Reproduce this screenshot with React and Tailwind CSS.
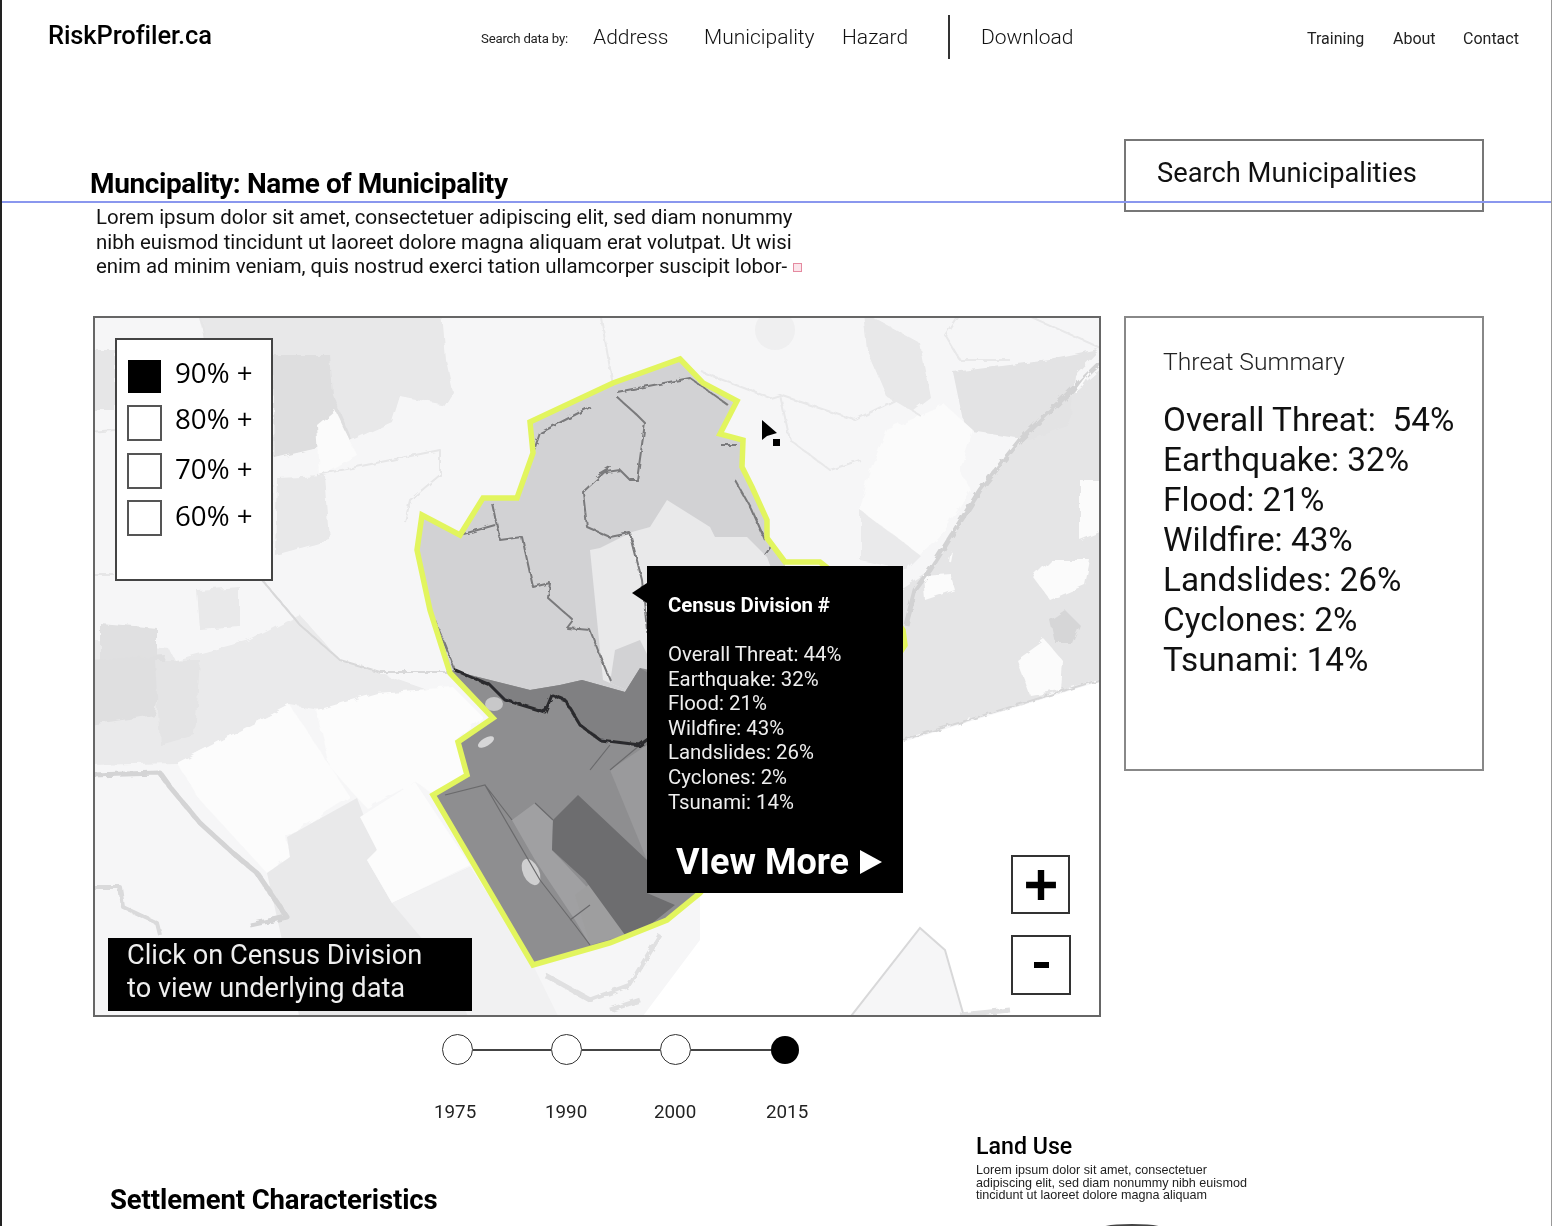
const threats = ["Overall Threat:  54%", "Earthquake: 32%", "Flood: 21%", "Wildfire: 43%", "Landslides: 26%", "Cyclones: 2%", "Tsunami: 14%"];
const tip = ["Overall Threat: 44%", "Earthquake: 32%", "Flood: 21%", "Wildfire: 43%", "Landslides: 26%", "Cyclones: 2%", "Tsunami: 14%"];

function MapArt() {
  return (
    <svg viewBox="95 318 1004 697" className="absolute inset-0 w-[1004px] h-[697px] blur-[0.5px]">
      <defs>
        <filter id="rough" x="-5%" y="-5%" width="110%" height="110%">
          <feTurbulence type="fractalNoise" baseFrequency="0.09" numOctaves="2" seed="4" />
          <feDisplacementMap in="SourceGraphic" scale="7" />
        </filter>
        <filter id="rough2" x="-5%" y="-5%" width="110%" height="110%">
          <feTurbulence type="fractalNoise" baseFrequency="0.14" numOctaves="2" seed="9" />
          <feDisplacementMap in="SourceGraphic" scale="5" />
        </filter>
      </defs>
      <rect x="95" y="318" width="1004" height="697" fill="#f6f6f7" />
      <g filter="url(#rough)">
        {/* pale regions, north-west */}
        <path fill="#e8e8e9" d="M197 312 L442 312 L446 360 L453 392 L445 405 L400 396 L392 422 L352 440 L272 458 L272 575 L273 395 L205 338 Z" />
        <path fill="#dededf" d="M272 355 L330 355 L333 395 L352 440 L275 458 Z" />
        <path fill="#e6e6e7" d="M90 350 L115 350 L115 410 L90 410 Z" />
        <path fill="#e8e8e9" d="M277 478 L325 476 L330 540 L275 555 Z" />
        <path fill="#fbfbfb" d="M317 425 L335 410 L357 455 L320 475 Z" />
        <path fill="#e9e9ea" d="M197 590 L240 587 L240 627 L200 630 Z" />
        <path fill="#eaeaeb" d="M90 640 L170 650 L175 660 L250 640 L300 615 L340 660 L428 690 L320 710 L290 705 L177 763 L90 765 Z" />
        <path fill="#e0e0e1" d="M100 623 L157 628 L157 670 L100 670 Z" />
        <path fill="#dfdfe0" d="M90 660 L165 655 L155 715 L90 725 Z" />
        <path fill="#e4e4e5" d="M155 660 L200 660 L195 735 L160 745 Z" />
        <path fill="#fcfcfc" d="M177 763 L290 705 L350 797 L287 837 L290 857 L267 873 L200 800 Z" />
        <path fill="#fcfcfc" d="M317 710 L377 693 L453 687 L483 717 L458 740 L467 775 L433 793 L415 782 L367 808 L353 793 L330 767 Z" />
      </g>
      <path fill="#e9e9ea" d="M287 837 L357 798 L377 850 L367 860 L392 903 L470 867 L533 965 L470 1020 L300 1020 L267 873 L290 857 Z" />
      <path fill="#fcfcfc" d="M360 817 L415 782 L470 865 L392 903 L367 860 L377 850 Z" />
      <path fill="#f1f1f2" d="M392 903 L470 867 L533 965 L560 1020 L470 1020 L440 960 Z" />
      <g filter="url(#rough)">
        {/* pale regions, east */}
        <path fill="#e5e5e6" d="M1105 365 L1020 440 L980 490 L955 530 L930 570 L898 590 L898 742 L1105 678 Z" />
        <path fill="#e3e3e4" d="M1099 350 L1075 375 L1070 425 L1030 440 L965 430 L953 372 L1010 365 L1050 360 Z" />
        <path fill="#e8e8e9" d="M863 312 L920 343 L930 397 L913 410 L887 397 L867 350 Z" />
        <path fill="#fbfbfb" d="M887 430 L945 405 L973 430 L960 470 L970 490 L945 530 L920 555 L860 510 L870 470 Z" />
        <path fill="#fbfbfb" d="M1033 577 L1050 560 L1090 560 L1085 585 L1050 600 Z" />
        <path fill="#fbfbfb" d="M1080 480 L1105 480 L1105 530 L1080 540 Z" />
        <path fill="#fbfbfb" d="M923 575 L950 573 L955 590 L925 600 Z" />
        <path fill="#fbfbfb" d="M1017 660 L1045 640 L1062 660 L1060 690 L1030 695 Z" />
        <path fill="#d6d6d7" d="M1050 620 L1065 610 L1080 625 L1072 643 L1055 643 Z" />
        <path fill="#eaeaeb" d="M860 510 L920 555 L905 570 L860 560 Z" />
      </g>
      <circle cx="775" cy="330" r="20" fill="#efeff0" />
      <path fill="#ffffff" d="M903 742 L1105 680 L1105 1020 L640 1020 L700 940 L700 893 L903 893 Z" />
      <path fill="#f6f6f7" stroke="#d8d8d9" strokeWidth="2" d="M848 1020 L920 928 L945 950 L965 1020 Z" />
      {/* roads and rivers */}
      <g fill="none" strokeLinejoin="round" filter="url(#rough2)">
        <path stroke="#d4d4d5" strokeWidth="5" d="M90 775 L160 773 L170 787 L200 823 L233 853 L257 873 L287 917 L250 925" />
        <path stroke="#dadadb" strokeWidth="4" d="M90 887 L120 887 L123 907 L157 923 L160 935" />
        <path stroke="#d8d8d9" strokeWidth="2" d="M262 580 L300 625 L340 660 L380 672 L450 672" />
        <path stroke="#e6e6e7" strokeWidth="2" d="M200 312 L205 340 M90 432 L115 430 M90 575 L115 575 M317 475 L440 450 L440 475 L410 500 L405 522" />
        <path stroke="#e8e8e9" strokeWidth="2" d="M702 372 L770 398 L780 395 L855 420 L895 400 L920 415 M780 395 L790 440 L830 470 L860 460 M600 312 L613 385 M960 312 L945 335 L960 360 L1010 360 M1020 312 L1105 350" />
        <path stroke="#d2d2d3" strokeWidth="5" d="M1105 358 L1020 440 L980 490 L955 530 L930 570 L915 590 L906 625" />
        <path stroke="#fbfbfb" strokeWidth="2" d="M1090 372 L1075 392 M950 562 L952 552" />
        <path stroke="#d6d6d7" strokeWidth="2" d="M903 740 L1105 678" />
        <path stroke="#e0e0e1" strokeWidth="5" d="M545 975 L590 1000 L630 985 L660 935 M610 1010 L640 1000 M960 1015 L1010 1010" />
      </g>
      {/* northern census divisions */}
      <path fill="#d2d2d4" d="M680 359 L703 383 L737 401 L720 434 L743 440 L742 467 L752 487 L767 520 L767 538 L785 562 L785 600 L650 700 L560 700 L450 673 L430 610 L417 550 L422 515 L460 535 L483 498 L517 498 L533 453 L530 422 L613 383 Z" />
      <path fill="#e9e9ea" d="M632 532 L650 527 L667 500 L710 527 L715 537 L747 537 L767 557 L790 620 L650 700 L603 680 L590 550 L600 548 Z" />
      <path fill="#d2d2d4" d="M610 683 L650 700 L650 660 L640 640 L615 650 Z" />
      <g fill="none" stroke="#7a7a7c" strokeWidth="2" strokeLinejoin="round" filter="url(#rough2)">
        <path d="M617 392 L690 378 L728 405 M617 397 L637 415 L645 423 L637 480 L630 480 L620 470 L600 473 L610 467 L583 492 L587 527 L610 537 L630 533 L642 580 L648 640" />
        <path d="M492 503 L500 540 L522 537 L533 587 L550 583 L548 598 L573 620 L567 628 L590 630 L603 663 L610 680" />
        <path d="M540 433 L590 407 M533 453 L540 433 M460 535 L495 525 M721 445 L738 445 M735 480 L752 510 L765 540 M765 555 L772 545 M435 620 L455 670" />
      </g>
      {/* southern census divisions */}
      <path fill="#8e8e90" d="M450 670 L530 690 L560 685 L582 680 L625 692 L640 668 L700 680 L700 893 L667 920 L610 943 L533 965 L433 795 L467 775 L458 742 L493 718 Z" />
      <path fill="#808082" d="M450 670 L530 690 L560 685 L582 680 L625 692 L640 668 L660 680 L660 760 L640 745 L600 740 L580 725 L565 700 L552 695 L545 712 L505 700 L490 685 Z" />
      <path fill="#9a9a9c" d="M610 770 L647 745 L660 770 L660 860 L647 860 Z" />
      <path fill="#a0a0a2" d="M512 820 L535 803 L553 820 L552 850 L585 885 L625 935 L590 945 L575 920 L535 860 Z" />
      <path fill="#9e9e9f" d="M575 895 L595 880 L625 935 L590 945 Z" />
      <path fill="#6d6d6f" d="M553 820 L578 795 L647 860 L647 893 L675 905 L650 925 L625 935 L585 880 L552 850 Z" />
      <ellipse cx="531" cy="872" rx="8" ry="14" fill="#cfcfd0" transform="rotate(-25 531 872)" />
      <ellipse cx="494" cy="704" rx="9" ry="7" fill="#c8c8c9" />
      <ellipse cx="486" cy="742" rx="9" ry="4" fill="#d6d6d7" transform="rotate(-30 486 742)" />
      <g fill="none" stroke="#6a6a6c" strokeWidth="1.2">
        <path d="M445 795 L485 785 L540 880 L575 925 L590 945 M485 785 L512 820 M535 803 L553 820 M570 920 L590 905 M590 770 L610 745 M610 770 L640 745" />
      </g>
      <path fill="none" stroke="#2b2b2d" strokeWidth="3" strokeLinejoin="round" filter="url(#rough2)" d="M455 670 L490 685 L505 700 L545 712 L552 695 L565 700 L580 725 L600 740 L640 745 L660 730" />
      <path fill="none" stroke="#e2f55e" strokeWidth="5.5" strokeLinejoin="miter" d="M680 359 L703 383 L737 401 L720 434 L743 440 L742 467 L752 487 L767 520 L767 538 L785 562 L820 562 L830 570 L880 600 L903 630 L905 645 L895 660 L700 893 L667 920 L610 943 L533 965 L433 795 L467 775 L458 742 L493 718 L450 673 L430 610 L417 550 L422 515 L460 535 L483 498 L517 498 L533 453 L530 422 L613 383 Z" />
      {/* pointer */}
      <path fill="#000" d="M762 420 L762 440 L767 436 L777 433 Z" />
      <rect x="773" y="439" width="7" height="7" fill="#000" />
    </svg>
  );
}

function Swatch({ on, label, box, row, shift }) {
  return (
    <div className={`flex items-center ${row}`}>
      <span className={`shrink-0 border-2 ${box} ${on ? "bg-black border-black" : "bg-white border-[#555]"}`} />
      <span className={`text-[27.7px] leading-[36px] text-black font-['Open_Sans',sans-serif] ${shift}`}>{label}</span>
    </div>
  );
}

export default function App() {
  return (
    <div className="relative w-[1552px] h-[1226px] overflow-hidden bg-white border-l-2 border-r border-l-[#222] border-r-[#999] text-black font-['Roboto',sans-serif] blur-[0.35px]">
      <div className="absolute left-0 right-0 top-[201px] h-[2px] bg-[#8a97ee] z-10" />

      <header className="flex items-start h-[72px]">
        <div className="ml-[46px] mt-[20px] text-[25.5px] leading-[30px] font-medium tracking-[-0.1px] w-[433px]">RiskProfiler.ca</div>
        <div className="mt-[31px] text-[13.2px] leading-[16px] text-[#222] tracking-[-0.2px] w-[112px]">Search data by:</div>
        <nav className="mt-[24px] flex text-[21px] leading-[26px] font-light text-[#111]">
          <span className="w-[111px]">Address</span>
          <span className="w-[138px]">Municipality</span>
          <span className="w-[106px]">Hazard</span>
        </nav>
        <div className="mt-[15px] w-[2px] h-[44px] bg-[#333]" />
        <div className="mt-[24px] ml-[31px] w-[326px] text-[21px] leading-[26px] font-light text-[#111]">Download</div>
        <nav className="mt-[29px] flex text-[16px] leading-[19px] text-[#222]">
          <span className="w-[86px]">Training</span>
          <span className="w-[70px]">About</span>
          <span>Contact</span>
        </nav>
      </header>

      <section className="flex items-start h-[244px] pt-[67px]">
        <div className="w-[1122px] ml-0">
          <h1 className="ml-[88px] mt-[30px] text-[28px] leading-[30px] font-bold tracking-[-0.38px]">Muncipality: Name of Municipality</h1>
          <p className="ml-[94px] mt-[6px] w-[730px] text-[20.42px] leading-[24.5px] text-[#111]">
            Lorem ipsum dolor sit amet, consectetuer adipiscing elit, sed diam nonummy<br />
            nibh euismod tincidunt ut laoreet dolore magna aliquam erat volutpat. Ut wisi<br />
            enim ad minim veniam, quis nostrud exerci tation ullamcorper suscipit lobor-
            <span className="inline-block align-middle ml-[6px] w-[9px] h-[9px] border border-[#e58aa0] bg-[#fbe4ea]" />
          </p>
        </div>
        <div className="w-[360px] h-[73px] border-2 border-[#777] pl-[31px] pt-[16px] text-[27.3px] leading-[32px] text-[#111]">Search Municipalities</div>
      </section>

      <section className="flex items-start">
        <div className="ml-[91px] w-[1008px] shrink-0">
          <div className="relative w-[1008px] h-[701px] border-2 border-[#666] overflow-hidden">
            <MapArt />
            <div className="absolute left-[20px] top-[20px] w-[158px] h-[243px] bg-white border-2 border-[#444] pl-[10px] pt-[20px]">
              <Swatch on label="90% +" box="w-[33px] h-[33px] ml-[1px]" row="" shift="ml-[14px] -mt-[10px]" />
              <Swatch label="80% +" box="w-[35px] h-[36px]" row="mt-[12px]" shift="ml-[13px] -mt-[10px]" />
              <Swatch label="70% +" box="w-[35px] h-[36px]" row="mt-[12px]" shift="ml-[13px] -mt-[6px]" />
              <Swatch label="60% +" box="w-[35px] h-[36px]" row="mt-[11px]" shift="ml-[13px] -mt-[6px]" />
            </div>

            <div className="absolute left-[552px] top-[248px] w-[256px] h-[327px] bg-black text-[#eeeeee] pl-[21px] pt-[27px]">
              <span className="absolute -left-[15px] top-[17px] w-0 h-0 border-y-[10px] border-y-transparent border-r-[15px] border-r-black" />
              <div className="text-[20.4px] leading-[24px] font-bold text-white whitespace-nowrap tracking-[-0.1px]">Census Division #</div>
              <ul className="mt-[25px] text-[20.4px] leading-[24.6px]">
                {tip.map((t) => <li key={t}>{t}</li>)}
              </ul>
              <div className="flex items-center mt-[28px] ml-[8px] text-[36px] leading-[40px] font-bold text-white">
                <span>VIew More</span>
                <svg width="24" height="26" viewBox="0 0 24 26" className="ml-[10px]"><path d="M1 1 L23 13 L1 25 Z" fill="#fff" /></svg>
              </div>
            </div>

            <div className="absolute left-[13px] top-[620px] w-[364px] h-[73px] bg-black text-[#eeeeee] text-[27.2px] leading-[33px] pl-[19px] pt-[1px]">
              Click on Census Division<br />to view underlying data
            </div>

            <div className="absolute left-[916px] top-[537px] w-[59px] h-[59px] bg-white border-2 border-[#333] flex items-center justify-center">
              <svg width="30" height="32" viewBox="0 0 28 30"><path d="M11 1 H17 V12 H28 V18 H17 V29 H11 V18 H0 V12 H11 Z" fill="#000" /></svg>
            </div>
            <div className="absolute left-[916px] top-[617px] w-[60px] h-[60px] bg-white border-2 border-[#333] flex items-center justify-center">
              <span className="block w-[15px] h-[6px] bg-black" />
            </div>
          </div>

          <div className="flex items-center ml-[349px] mt-[17px] w-[360px]">
            <span className="w-[31px] h-[31px] rounded-full border-[1.5px] border-[#333] bg-white shrink-0" />
            <span className="w-[78px] h-[2px] bg-[#444]" />
            <span className="w-[31px] h-[31px] rounded-full border-[1.5px] border-[#333] bg-white shrink-0" />
            <span className="w-[78px] h-[2px] bg-[#444]" />
            <span className="w-[31px] h-[31px] rounded-full border-[1.5px] border-[#333] bg-white shrink-0" />
            <span className="w-[80px] h-[2px] bg-[#444]" />
            <span className="w-[28px] h-[28px] rounded-full bg-black shrink-0" />
          </div>
          <div className="flex mt-[36px] ml-[341px] text-[18.8px] leading-[22px] text-[#222]">
            <span className="w-[111px]">1975</span>
            <span className="w-[109px]">1990</span>
            <span className="w-[112px]">2000</span>
            <span>2015</span>
          </div>
        </div>

        <aside className="ml-[23px] w-[360px] h-[455px] border-2 border-[#888] pl-[37px] pt-[29px]">
          <h2 className="text-[24.7px] leading-[30px] font-light text-[#222]">Threat Summary</h2>
          <ul className="mt-[23px] text-[33.3px] leading-[40px] text-[#111] whitespace-pre">
            {threats.map((t) => <li key={t}>{t}</li>)}
          </ul>
        </aside>
      </section>

      <section className="absolute left-[108px] top-[1185px] text-[27.5px] leading-[30px] font-bold tracking-[-0.1px]">Settlement Characteristics</section>
      <section className="absolute left-[974px] top-[1133px] w-[290px]">
        <h3 className="text-[23.2px] leading-[26px] font-medium">Land Use</h3>
        <p className="mt-[5px] text-[12.6px] leading-[12.5px] text-[#222] font-['Liberation_Sans',sans-serif]">
          Lorem ipsum dolor sit amet, consectetuer<br />
          adipiscing elit, sed diam nonummy nibh euismod<br />
          tincidunt ut laoreet dolore magna aliquam
        </p>
      </section>
      <div className="absolute left-[1090px] top-[1224px] w-[80px] h-[16px] rounded-[50%] bg-[#444]" />
    </div>
  );
}
